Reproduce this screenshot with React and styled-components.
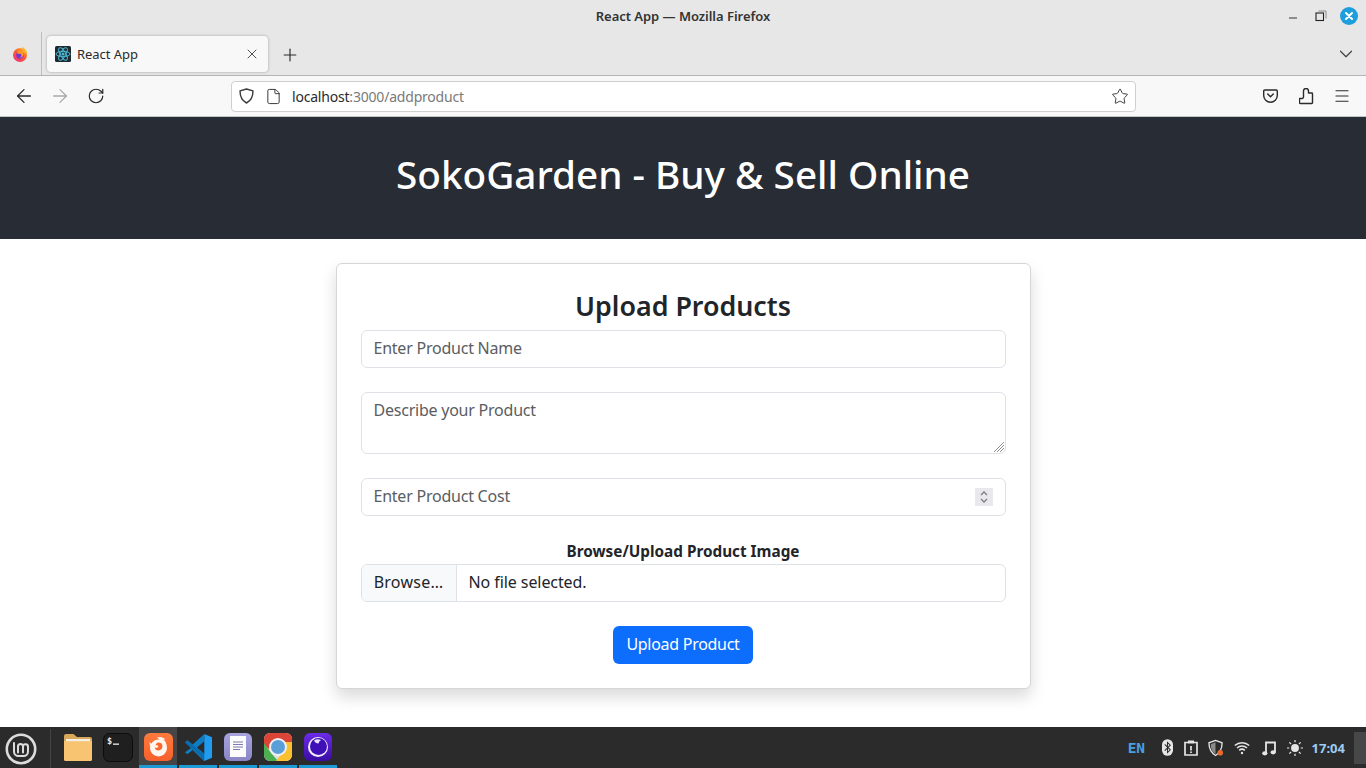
import React from "react";
import styled, { createGlobalStyle } from "styled-components";
import { ArrowLeft, ArrowRight, RotateCw, File, Star, Plus, X, ChevronDown, Menu } from "lucide-react";

const Global = createGlobalStyle`
  html, body { margin: 0; padding: 0; height: 768px; overflow: hidden; background: #fff; }
  * { box-sizing: border-box; }
  body { font-family: "Noto Sans", "Open Sans", sans-serif; color: #212529; }
`;

const Screen = styled.div`
  width: 1366px; height: 768px; display: flex; flex-direction: column; overflow: hidden;
`;
const TitleBar = styled.div`
  height: 36px; flex: none; background: #e7e7e7; position: relative;
  display: flex; align-items: center; justify-content: center;
`;
const WindowTitle = styled.div`
  font-size: 13px; font-weight: 600; color: #333; letter-spacing: -0.03px; line-height: 1; margin-bottom: 4px;
`;
const WindowControls = styled.div`
  position: absolute; right: 8px; top: 7px; display: flex; align-items: center; gap: 10px;
`;
const ControlSlot = styled.div`
  width: 18px; height: 18px; display: flex; align-items: center; justify-content: center;
`;
const TabBar = styled.div`
  height: 40px; flex: none; background: #e7e7e7; border-bottom: 1px solid #b4b4b4;
  display: flex; align-items: flex-start; position: relative;
`;
const FoxSlot = styled.div`
  width: 42px; height: 43px; margin-top: -4px; display: flex; align-items: center; justify-content: center;
  border-right: 1px solid #bdbdbd; padding: 1px 1px 0 0; flex: none;
`;
const Tab = styled.div`
  margin-left: 5px; width: 221px; height: 36px; background: #f8f8f8; border-radius: 4px;
  box-shadow: 0 0 3px rgba(0,0,0,.3); display: flex; align-items: center; padding: 0 8px 0 8px; gap: 6px;
`;
const TabLabel = styled.span`
  font-size: 13px; color: #2b2b2b; flex: 1; letter-spacing: -0.05px;
`;
const NewTab = styled.div`
  width: 44px; height: 37px; display: flex; align-items: center; justify-content: center; color: #2b2b2b;
`;
const Spacer = styled.div`flex: 1;`;
const TabListBtn = styled.div`
  width: 40px; height: 36px; display: flex; align-items: center; justify-content: center; color: #444;
`;
const NavBar = styled.div`
  height: 41px; flex: none; background: #f8f8f8; display: flex; align-items: center; padding: 0 6px; border-bottom: 1px solid #c4c4c4;
`;
const NavBtn = styled.div`
  width: 36px; height: 36px; display: flex; align-items: center; justify-content: center; flex: none;
  color: ${p => (p.$off ? "#a9a9a9" : "#2b2b2b")};
`;
const UrlBar = styled.div`
  margin-left: 117px; width: 905px; height: 31px; background: #fff; border: 1px solid #cfcfcf; border-radius: 4px;
  display: flex; align-items: center; padding: 0 6px 0 5px; flex: none;
`;
const UrlIcon = styled.div`
  width: 18px; height: 18px; display: flex; align-items: center; justify-content: center; color: #3a3a3a; flex: none;
  margin-right: ${p => p.$mr || 0}px;
`;
const UrlText = styled.div`
  font-size: 14px; color: #2b2b2b; flex: 1; letter-spacing: -0.2px;
`;
const UrlDim = styled.span`color: #7a7a7a;`;
const NavRight = styled.div`
  margin-left: 116px; display: flex;
`;
const Page = styled.main`
  flex: 1; min-height: 0; background: #fff; display: flex; flex-direction: column;
`;
const Header = styled.header`
  height: 122px; flex: none; background: #282c34; display: flex; align-items: center; justify-content: center;
  padding-bottom: 8px;
`;
const Heading = styled.h1`
  margin: 0; color: #fff; font-size: 38.7px; font-weight: 500; line-height: 1.2;
`;
const Content = styled.div`
  display: flex; justify-content: center; padding-top: 24px;
`;
const Card = styled.form`
  width: 695px; background: #fff; border: 1px solid #d5d6d8; border-radius: 6px;
  box-shadow: 0 8px 16px rgba(0,0,0,.15); padding: 24px; display: flex; flex-direction: column;
`;
const CardTitle = styled.h2`
  margin: 0 0 8px; font-size: 26.8px; height: 34px; line-height: 36px; font-weight: 600; text-align: center; color: #212529;
`;
const fieldCss = `
  display: block; width: 100%; border: 1px solid #dee2e6; border-radius: 6px; background: #fff;
  font-family: "Noto Sans", sans-serif; font-size: 16px; line-height: 24px; color: #212529;
  padding: 5px 12px 7px; margin: 0 0 24px; outline: none;
  &::placeholder { color: #5a5d61; opacity: 1; }
`;
const TextInput = styled.input`${fieldCss} height: 38px; letter-spacing: -0.23px;`;
const AreaWrap = styled.div`position: relative; margin-bottom: 24px;`;
const TextArea = styled.textarea`${fieldCss} height: 62px; margin: 0; resize: none; letter-spacing: -0.23px;`;
const Grip = styled.svg`position: absolute; right: 1px; bottom: 1px;`;
const NumberWrap = styled.div`position: relative;`;
const Spinner = styled.div`
  position: absolute; top: 10px; right: 13px; width: 18px; height: 18px; background: #e9e9ed;
  display: flex; align-items: center; justify-content: center;
`;
const FileLabel = styled.label`
  display: block; height: 24px; text-align: center; font-weight: 700; font-size: 15.3px; line-height: 22px; color: #212529;
`;
const FileRow = styled.div`
  display: flex; height: 38px; border: 1px solid #dee2e6; border-radius: 6px; overflow: hidden; margin-bottom: 24px;
`;
const BrowseBtn = styled.div`
  width: 95px; flex: none; background: #f8f9fa; border-right: 1px solid #dee2e6; display: flex; align-items: center;
  justify-content: center; font-size: 16px; padding-bottom: 2px; letter-spacing: 0.25px;
`;
const FileName = styled.div`
  flex: 1; display: flex; align-items: center; padding: 0 0 2px 12px; font-size: 16px; letter-spacing: -0.08px;
`;
const SubmitRow = styled.div`display: flex; justify-content: center;`;
const Submit = styled.button`
  width: 140px; height: 38px; border: 0; border-radius: 6px; background: #0d6efd; color: #fff; padding: 0 0 2px;
  font-family: "Noto Sans", sans-serif; font-size: 16px; letter-spacing: -0.28px;
`;
const Taskbar = styled.footer`
  height: 41px; flex: none; background: #2b2b2b; display: flex; align-items: stretch; position: relative;
`;
const MenuSlot = styled.div`
  width: 51px; flex: none; display: flex; align-items: center; justify-content: center; padding-right: 9px;
  position: relative; padding-top: 2px;
  &::after { content: ""; position: absolute; right: 0; top: 2px; bottom: 0; width: 1px; background: #444; }
`;
const Launchers = styled.div`
  display: flex; gap: 2px; margin-left: 8px; width: 278px;
`;
const Launcher = styled.div`
  width: 38px; display: flex; align-items: center; justify-content: center; padding-top: 2px;
  background: ${p => (p.$active ? "#454545" : "transparent")};
  border-bottom: 3px solid ${p => (p.$running ? "#1c9ad6" : "transparent")};
`;
const Tray = styled.div`
  margin-left: auto; display: flex; align-items: center; height: 100%;
`;
const Lang = styled.span`
  font-family: "DejaVu Sans Mono", monospace; font-weight: 700; font-size: 14.5px; color: #4a9fe0; margin-right: 11px; letter-spacing: -0.3px;
`;
const TrayIcon = styled.div`
  width: ${p => p.$w}px; display: flex; align-items: center; justify-content: center; height: 20px;
`;
const Clock = styled.span`
  font-family: "Noto Sans", sans-serif; font-weight: 700; font-size: 13px; color: #9ccbf3; margin-left: 4px; margin-right: 9px;
`;
const Handle = styled.div`width: 12px; height: 32px; background: #474747; margin-top: 1px;`;

const FirefoxLogo = ({ size = 16 }) => (
  <svg width={size} height={size} viewBox="0 0 16 16">
    <defs>
      <linearGradient id="ffg" x1="0.85" y1="0" x2="0.15" y2="1">
        <stop offset="0" stopColor="#ffc02e" /><stop offset=".45" stopColor="#ff5c2e" /><stop offset="1" stopColor="#f0307a" />
      </linearGradient>
    </defs>
    <circle cx="8" cy="9" r="7" fill="url(#ffg)" />
    <path d="M10.500 0.500c1 1.700 4 2.800 4.800 6.500L11 6.500z" fill="#ffb52a" />
    <circle cx="8" cy="9" r="3.800" fill="#7a35d8" />
    <path d="M5.500 5.200c2.300-1.400 5.400-.3 6 2.400.5 2.600-1.500 4.600-3.800 4.300 1.700-.7 2.200-2.300 1.600-3.400-.6-1.200-2.200-.8-3-.6-1-.6-1.200-1.800-.8-2.700z" fill="#ff9a2b" />
  </svg>
);
const ReactFavicon = () => (
  <svg width="16" height="16" viewBox="0 0 16 16">
    <rect width="16" height="16" rx="1.500" fill="#1e2a30" />
    <g fill="none" stroke="#4db8d4" strokeWidth="1">
      <ellipse cx="8" cy="8" rx="7" ry="2.700" />
      <ellipse cx="8" cy="8" rx="7" ry="2.700" transform="rotate(60 8 8)" />
      <ellipse cx="8" cy="8" rx="7" ry="2.700" transform="rotate(120 8 8)" />
    </g>
    <circle cx="8" cy="8" r="1.500" fill="#4db8d4" />
  </svg>
);
const MintLogo = () => (
  <svg width="32" height="32" viewBox="0 0 32 32" fill="none" stroke="#dcdcdc">
    <circle cx="16" cy="16" r="14.200" strokeWidth="2.600" />
    <path d="M9 10v8.500a4.500 4.500 0 0 0 4.500 4.500h5a4.500 4.500 0 0 0 4.500-4.500V14a2.500 2.500 0 0 0-5-.4V19.500M13 19.500V13.600a2.500 2.500 0 0 1 5 0" strokeWidth="2" strokeLinecap="round" />
  </svg>
);
const FolderIcon = () => (
  <svg width="28" height="27" viewBox="0 0 28 27">
    <path d="M0 2a2 2 0 0 1 2-2h7.500l3.500 3h13a2 2 0 0 1 2 2v5H0z" fill="#d9a75a" />
    <path d="M0 7h28v18.500a1.500 1.500 0 0 1-1.500 1.500h-25A1.500 1.500 0 0 1 0 25.500z" fill="#f8c471" />
    <rect x="2" y="5" width="24" height="2.200" fill="#f2efe6" />
  </svg>
);
const TerminalIcon = () => (
  <svg width="30" height="29" viewBox="0 0 30 29">
    <rect x=".5" y=".5" width="29" height="28" rx="6" fill="#1f1f1f" stroke="#0c0c0c" />
    <text x="4" y="10.500" fontFamily="'DejaVu Sans Mono', monospace" fontSize="8.500" fontWeight="700" fill="#eee">$</text>
    <rect x="10" y="10.500" width="6" height="1.300" fill="#eee" />
  </svg>
);
const FirefoxTile = () => (
  <svg width="29" height="28" viewBox="0 0 29 28">
    <defs>
      <linearGradient id="ftg" x1="0" y1="0" x2="0" y2="1">
        <stop offset="0" stopColor="#ff7a3c" /><stop offset="1" stopColor="#f7602b" />
      </linearGradient>
    </defs>
    <rect width="29" height="28" rx="6" fill="url(#ftg)" />
    <circle cx="14.500" cy="15" r="8.500" fill="#fff6ef" />
    <path d="M13 4.500c3-1.300 6.500-.3 8.500 1.800l-2 .2c1.500 1.300 3 3.500 3 6L17 8z" fill="#fff6ef" />
    <path d="M14.500 9.500c2.500 0 4 1.700 4 3.800 0 2.300-1.700 4.200-4 4.200-2 0-3.600-1.300-3.800-3 1 .4 2 .4 2.800 0 .8-.5 1-1.200.5-1.800-.6-.7-1.600-.6-2.500-.4.500-1.500 1.600-2.800 2.500-2.800z" fill="#f9692f" />
    <path d="M5.500 8c.3 1.500 1 2.300 2 2.500L6 14z" fill="#fff6ef" />
  </svg>
);
const VSCodeIcon = () => (
  <svg width="29" height="29" viewBox="0 0 30 30">
    <path d="M21 1 29 4.500v21L21 29 9 17.500l12-9.500V1z" fill="#1f9cf0" />
    <path d="M21 1v7.500L9 17.500 3.500 22 1 20 8 15 1 9.500 3.500 7.500 9 12z" fill="#0f7cc4" />
    <path d="M21 21.500 3.500 8 1 9.800l20 19.200z" fill="#0a6cad" />
    <path d="M21 8.500V21.500L13.200 15z" fill="#2b2b2b" />
  </svg>
);
const NotesIcon = () => (
  <svg width="28" height="28" viewBox="0 0 28 28">
    <defs>
      <linearGradient id="ntg" x1="0" y1="0" x2="0" y2="1">
        <stop offset="0" stopColor="#a6a3dd" /><stop offset="1" stopColor="#8a86c6" />
      </linearGradient>
    </defs>
    <rect width="28" height="28" rx="6" fill="url(#ntg)" />
    <rect x="6" y="3" width="16" height="21" fill="#fbfbfb" />
    <path d="M9 9h10M9 11.500h10M9 14h10M9 16.500h7" stroke="#7d7ab0" strokeWidth="1" />
  </svg>
);
const ChromeIcon = () => (
  <svg width="28" height="28" viewBox="0 0 28 28">
    <rect width="28" height="28" rx="6" fill="#e0e0e0" />
    <path d="M0 6a6 6 0 0 1 6-6h16a6 6 0 0 1 6 6v4H14L5 16 0 12z" fill="#dc4437" />
    <path d="M0 10l7 10 7 8H6a6 6 0 0 1-6-6z" fill="#4caf50" />
    <path d="M15 9h13v13a6 6 0 0 1-6 6H12l7-9z" fill="#fbc02d" />
    <circle cx="14" cy="14" r="9" fill="#f1f1f1" />
    <circle cx="14" cy="14" r="7" fill="#5a9fd8" />
  </svg>
);
const EclipseIcon = () => (
  <svg width="28" height="28" viewBox="0 0 28 28">
    <defs>
      <linearGradient id="ecg" x1="0" y1="0" x2="0" y2="1">
        <stop offset="0" stopColor="#6c2be8" /><stop offset="1" stopColor="#3a0ca3" />
      </linearGradient>
    </defs>
    <rect width="28" height="28" rx="6" fill="url(#ecg)" />
    <circle cx="14" cy="14" r="10" fill="#f2eeff" />
    <circle cx="14.500" cy="13.500" r="8.500" fill="#3f0fb8" />
    <path d="M10 7.500a7 7 0 0 1 7-.5 5 5 0 0 0-2.500 3.500A5 5 0 0 1 10 7.500z" fill="#e9e3ff" />
  </svg>
);

const tray = [
  { w: 23, icon: <svg width="11" height="17" viewBox="0 0 12 18"><rect width="12" height="18" rx="6" fill="#e6e6e6" /><path d="M3 5.500l6 6-3 3v-11l3 3-6 6" fill="none" stroke="#2b2b2b" strokeWidth="1.100" /></svg> },
  { w: 24, icon: <svg width="14" height="16" viewBox="0 0 14 16" fill="none" stroke="#e6e6e6" strokeWidth="1.700"><path d="M4.500 2.500H1v12.500h12V2.500H9.500" /><rect x="4" y=".5" width="6" height="3" fill="#e6e6e6" stroke="none" /><path d="M7 6v4.500M7 11.500V13" /></svg> },
  { w: 26, icon: <svg width="16" height="18" viewBox="0 0 17 18"><path d="M8 1 1 3.500c0 5 1.500 10 7 13.500 5.500-3.500 7-8.500 7-13.500z" fill="none" stroke="#e6e6e6" strokeWidth="1.400" /><path d="M8 3 3 5c0 4 1 8 5 10.500z" fill="#8a8a8a" /><circle cx="13" cy="14" r="3" fill="#e56a2d" /></svg> },
  { w: 27, icon: <svg width="16" height="14" viewBox="0 0 16 14" fill="none" stroke="#e6e6e6" strokeWidth="1.500"><path d="M.8 4.500a10.500 10.500 0 0 1 14.400 0M3 7a7.500 7.500 0 0 1 10 0M5.200 9.400a4.200 4.200 0 0 1 5.600 0" /><circle cx="8" cy="12" r="1.200" fill="#e6e6e6" stroke="none" /></svg> },
  { w: 26, icon: <svg width="14" height="16" viewBox="0 0 14 16"><path d="M4 13V2.500h9V12" fill="none" stroke="#e6e6e6" strokeWidth="1.800" /><ellipse cx="2.800" cy="13.300" rx="2.600" ry="2.100" fill="#e6e6e6" /><ellipse cx="11.200" cy="12.300" rx="2.600" ry="2.100" fill="#e6e6e6" /></svg> },
  { w: 26, icon: <svg width="16" height="16" viewBox="0 0 17 17"><circle cx="8.500" cy="8.500" r="4.200" fill="#e6e6e6" /><path d="M8.500 0v2.500M8.500 14.500V17M0 8.500h2.500M14.500 8.500H17M2.500 2.500l1.800 1.800M12.700 12.700l1.800 1.800M2.500 14.500l1.800-1.800M12.700 4.300l1.800-1.800" stroke="#e6e6e6" strokeWidth="1.300" /></svg> },
];

export default function App() {
  return (
    <Screen>
      <Global />
      <TitleBar>
        <WindowTitle>React App — Mozilla Firefox</WindowTitle>
        <WindowControls>
          <ControlSlot>
            <svg width="10" height="10" viewBox="0 0 10 10"><path d="M1 7h8" stroke="#333" strokeWidth="1" /></svg>
          </ControlSlot>
          <ControlSlot>
            <svg width="12" height="12" viewBox="0 0 12 12" fill="none"><rect x="1" y="3" width="7.500" height="7.500" stroke="#222" strokeWidth="1.100" /><path d="M3.500 1h7.500v7.500" stroke="#888" strokeWidth="1" /></svg>
          </ControlSlot>
          <ControlSlot>
            <svg width="18" height="18" viewBox="0 0 18 18"><circle cx="9" cy="9" r="9" fill="#1f9ede" /><path d="M6 6l6 6M12 6l-6 6" stroke="#fff" strokeWidth="2" strokeLinecap="round" /></svg>
          </ControlSlot>
        </WindowControls>
      </TitleBar>
      <TabBar>
        <FoxSlot><FirefoxLogo /></FoxSlot>
        <Tab>
          <ReactFavicon />
          <TabLabel>React App</TabLabel>
          <X size={16} strokeWidth={1.300} color="#333" />
        </Tab>
        <NewTab><Plus size={20} strokeWidth={1.400} /></NewTab>
        <Spacer />
        <TabListBtn><ChevronDown size={22} strokeWidth={1.300} /></TabListBtn>
      </TabBar>
      <NavBar>
        <NavBtn><ArrowLeft size={22} strokeWidth={1.400} /></NavBtn>
        <NavBtn $off><ArrowRight size={22} strokeWidth={1.400} /></NavBtn>
        <NavBtn><RotateCw size={18} strokeWidth={1.600} /></NavBtn>
        <UrlBar>
          <UrlIcon $mr={9}>
            <svg width="15" height="16" viewBox="0 0 15 16" fill="none" stroke="#3a3a3a" strokeWidth="1.400" strokeLinejoin="round"><path d="M7.500 1 1 2.800c0 5.500 1.500 9.700 6.500 12.200 5-2.500 6.500-6.700 6.500-12.200z" /></svg>
          </UrlIcon>
          <UrlIcon $mr={10}><File size={17} strokeWidth={1.400} /></UrlIcon>
          <UrlText>localhost<UrlDim>:3000/addproduct</UrlDim></UrlText>
          <UrlIcon><Star size={19} strokeWidth={1.300} /></UrlIcon>
        </UrlBar>
        <NavRight>
          <NavBtn>
            <svg width="15" height="14" viewBox="0 0 15 14" fill="none" stroke="#2b2b2b" strokeWidth="1.400"><path d="M1.700 1h11.600a1 1 0 0 1 1 1v4.500a6.800 6.800 0 0 1-13.600 0V2a1 1 0 0 1 1-1z" /><path d="M4.700 5l2.800 2.800L10.300 5" strokeLinecap="round" /></svg>
          </NavBtn>
          <NavBtn>
            <svg width="15" height="17" viewBox="0 0 15 17" fill="none" stroke="#2b2b2b" strokeWidth="1.400" strokeLinejoin="round"><path d="M4.500 5V3a2.500 2.500 0 0 1 5 0v2h3.300a.7.7 0 0 1 .7.700v9.100a.7.7 0 0 1-.7.700H1.200a.7.7 0 0 1-.7-.7v-4.300h2.700a1.500 1.500 0 0 0 1.300-1.500z" /></svg>
          </NavBtn>
          <NavBtn><Menu size={18} strokeWidth={1.600} /></NavBtn>
        </NavRight>
      </NavBar>
      <Page>
        <Header><Heading>SokoGarden - Buy &amp; Sell Online</Heading></Header>
        <Content>
          <Card>
            <CardTitle>Upload Products</CardTitle>
            <TextInput type="text" placeholder="Enter Product Name" />
            <AreaWrap>
              <TextArea placeholder="Describe your Product" />
              <Grip width="12" height="12" viewBox="0 0 12 12" stroke="#8d8d8d" strokeWidth="1">
                <path d="M11 1 1 11M11 4 4 11M11 7l-4 4" />
              </Grip>
            </AreaWrap>
            <NumberWrap>
              <TextInput type="text" placeholder="Enter Product Cost" />
              <Spinner>
                <svg width="10" height="14" viewBox="0 0 10 14" fill="none" stroke="#7d7d86" strokeWidth="1.300"><path d="M2 5l3-3 3 3M2 9l3 3 3-3" /></svg>
              </Spinner>
            </NumberWrap>
            <FileLabel>Browse/Upload Product Image</FileLabel>
            <FileRow>
              <BrowseBtn>Browse…</BrowseBtn>
              <FileName>No file selected.</FileName>
            </FileRow>
            <SubmitRow><Submit type="button">Upload Product</Submit></SubmitRow>
          </Card>
        </Content>
      </Page>
      <Taskbar>
        <MenuSlot><MintLogo /></MenuSlot>
        <Launchers>
          <Launcher><FolderIcon /></Launcher>
          <Launcher><TerminalIcon /></Launcher>
          <Launcher $active $running><FirefoxTile /></Launcher>
          <Launcher $running><VSCodeIcon /></Launcher>
          <Launcher $running><NotesIcon /></Launcher>
          <Launcher $running><ChromeIcon /></Launcher>
          <Launcher $running><EclipseIcon /></Launcher>
        </Launchers>
        <Tray>
          <Lang>EN</Lang>
          {tray.map((t, i) => <TrayIcon key={i} $w={t.w}>{t.icon}</TrayIcon>)}
          <Clock>17:04</Clock>
          <Handle />
        </Tray>
      </Taskbar>
    </Screen>
  );
}
